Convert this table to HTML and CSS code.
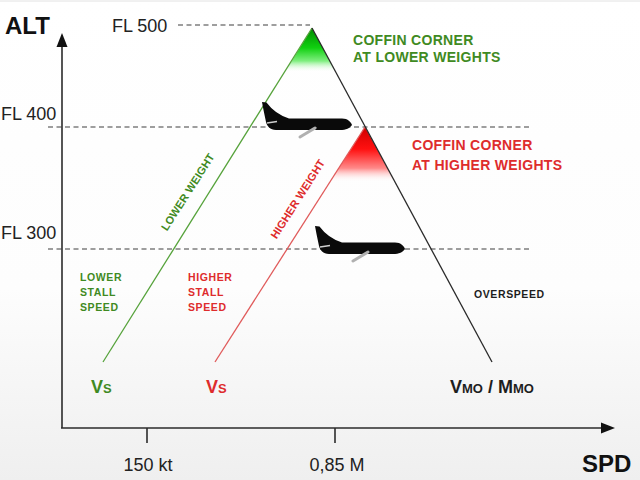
FILE: index.html
```html
<!DOCTYPE html>
<html lang="en">
<head>
<meta charset="utf-8">
<title>Coffin corner</title>
<link rel="stylesheet" href="styles.css">
</head>
<body>
<div class="page">
<svg class="chart" width="640" height="480" viewBox="0 0 640 480" xmlns="http://www.w3.org/2000/svg">
  <defs>
    <linearGradient id="bg" x1="0" y1="0" x2="0" y2="1">
      <stop offset="0" stop-color="#ffffff"/>
      <stop offset="0.6" stop-color="#fdfdfd"/>
      <stop offset="1" stop-color="#efefef"/>
    </linearGradient>
    <linearGradient id="gG" gradientUnits="userSpaceOnUse" x1="0" y1="28" x2="0" y2="72">
      <stop offset="0" stop-color="#008a00"/>
      <stop offset="0.45" stop-color="#10d010"/>
      <stop offset="0.75" stop-color="#80ee80"/>
      <stop offset="1" stop-color="#ffffff" stop-opacity="0"/>
    </linearGradient>
    <linearGradient id="gR" gradientUnits="userSpaceOnUse" x1="0" y1="127" x2="0" y2="182">
      <stop offset="0" stop-color="#d00000"/>
      <stop offset="0.4" stop-color="#ff1010"/>
      <stop offset="0.75" stop-color="#ff8a8a"/>
      <stop offset="1" stop-color="#ffffff" stop-opacity="0"/>
    </linearGradient>
    <g id="plane">
      <path class="plane-body" d="M0,0 L4.5,0.5 Q13,12 27,16.5 L80,16.5 C86,16.5 89,20 90,23 C88,26 84,28 78,28 L14,28 C8,28 5,24 4,20 L1.5,8 Z"/>
      <path class="plane-stab" d="M5,21 L15,19.5"/>
      <path class="plane-wing" d="M53,26 L38,35"/>
    </g>
  </defs>

  <rect class="bg" x="0" y="0" width="640" height="480" fill="url(#bg)"/>
  <line class="topline" x1="0" y1="1" x2="640" y2="1"/>

  <!-- coloured coffin areas -->
  <polygon points="312,28 285,72 336,72" fill="url(#gG)"/>
  <polygon points="365,127 330,182 395,182" fill="url(#gR)"/>

  <!-- dashed flight levels -->
  <line class="dash" x1="178" y1="25" x2="310" y2="25"/>
  <line class="dash" x1="48" y1="127" x2="532" y2="127"/>
  <line class="dash" x1="48" y1="249" x2="530" y2="249"/>

  <!-- envelope lines -->
  <line class="ln-green" x1="312" y1="28" x2="103" y2="362"/>
  <line class="ln-red" x1="365" y1="127" x2="215" y2="362"/>
  <line class="ln-black" x1="312" y1="28" x2="492" y2="362"/>

  <!-- axes -->
  <line class="axis" x1="62" y1="44" x2="62" y2="428"/>
  <line class="axis" x1="61" y1="428" x2="604" y2="428"/>
  <polygon class="arrow" points="62,33 56.5,47 67.5,47"/>
  <polygon class="arrow" points="615,428 601,422.5 601,433.5"/>
  <line class="axis" x1="147" y1="428" x2="147" y2="443"/>
  <line class="axis" x1="335" y1="428" x2="335" y2="443"/>

  <!-- planes -->
  <use href="#plane" x="262" y="102"/>
  <use href="#plane" x="315" y="226"/>

  <!-- axis labels -->
  <text class="big" x="5" y="34">ALT</text>
  <text class="big" x="582" y="472">SPD</text>
  <text class="fl" x="112" y="32">FL 500</text>
  <text class="fl" x="1" y="120">FL 400</text>
  <text class="fl" x="1" y="239">FL 300</text>
  <text class="fl mid" x="148" y="471">150 kt</text>
  <text class="fl mid" x="337" y="471">0,85 M</text>

  <!-- coffin corner notes -->
  <text class="note green" x="353" y="45">COFFIN CORNER</text>
  <text class="note green" x="353" y="62">AT LOWER WEIGHTS</text>
  <text class="note red" x="412" y="150">COFFIN CORNER</text>
  <text class="note red" x="412" y="170">AT HIGHER WEIGHTS</text>

  <!-- slanted labels -->
  <text class="slant green mid" transform="translate(191,194) rotate(-57.5)">LOWER WEIGHT</text>
  <text class="slant red mid" transform="translate(301,201) rotate(-57.5)">HIGHER WEIGHT</text>

  <!-- stall speed notes -->
  <text class="small green" x="80" y="281">LOWER</text>
  <text class="small green" x="80" y="296">STALL</text>
  <text class="small green" x="80" y="311">SPEED</text>
  <text class="small red" x="188" y="281">HIGHER</text>
  <text class="small red" x="188" y="296">STALL</text>
  <text class="small red" x="188" y="311">SPEED</text>
  <text class="small dark" x="474" y="298">OVERSPEED</text>

  <!-- speed labels -->
  <text class="vs green" x="91" y="393">V<tspan class="sub">S</tspan></text>
  <text class="vs red" x="206" y="393">V<tspan class="sub">S</tspan></text>
  <text class="vs dark" x="450" y="393">V<tspan class="sub">MO</tspan> / M<tspan class="sub">MO</tspan></text>
</svg>
</div>
</body>
</html>
```

FILE: styles.css
```css
html, body {
  margin: 0;
  padding: 0;
  background: #ffffff;
}
.page {
  width: 640px;
  height: 480px;
  overflow: hidden;
}
.chart {
  display: block;
  font-family: "Liberation Sans", Arial, sans-serif;
}
.topline { stroke: #e2e2e2; stroke-width: 1; }
.dash {
  stroke: #3e3e3e;
  stroke-width: 1.2;
  stroke-dasharray: 5 3.5;
}
.ln-green { stroke: #55a23a; stroke-width: 1.3; }
.ln-red { stroke: #e05a5a; stroke-width: 1.3; }
.ln-black { stroke: #2a2a2a; stroke-width: 1.3; }
.axis { stroke: #2b2b2b; stroke-width: 1.6; }
.arrow { fill: #111111; }
.plane-body { fill: #0a0a0a; }
.plane-stab { stroke: #cfcfcf; stroke-width: 1.4; fill: none; }
.plane-wing { stroke: #b0b0b0; stroke-width: 3; fill: none; stroke-linecap: round; }

.big { font-size: 24px; font-weight: bold; fill: #111111; }
.fl { font-size: 18px; fill: #222222; }
.mid { text-anchor: middle; }
.note { font-size: 14px; font-weight: bold; letter-spacing: 0.3px; }
.slant { font-size: 11px; font-weight: bold; letter-spacing: 0.1px; }
.small { font-size: 10.5px; font-weight: bold; letter-spacing: 0.6px; }
.vs { font-size: 18px; font-weight: bold; }
.sub { font-size: 13px; }

.green { fill: #3f8a22; }
.red { fill: #de2c2c; }
.dark { fill: #1e1e1e; }
```
